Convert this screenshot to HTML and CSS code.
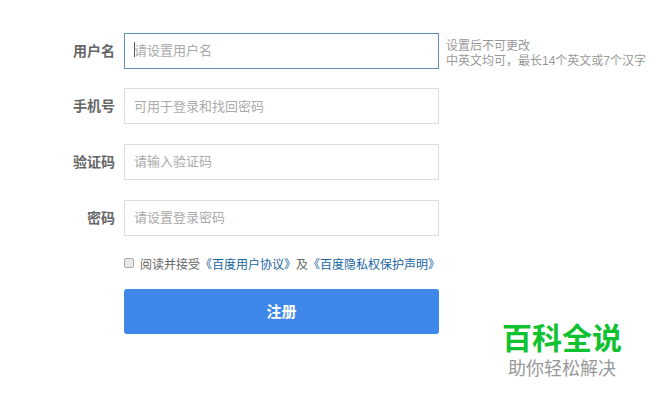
FILE: index.html
```html
<!DOCTYPE html>
<html lang="zh-CN">
<head>
    <meta charset="UTF-8">
    <title>注册</title>
    <link rel="stylesheet" href="styles.css">
</head>
<body>
    <form class="reg-form">
        <div class="form-row">
            <label class="form-label" for="username">用户名</label>
            <div class="form-input form-input-focus"><span class="caret"></span><span id="username">请设置用户名</span></div>
            <div class="form-tip">设置后不可更改<br>中英文均可，最长14个英文或7个汉字</div>
        </div>
        <div class="form-row">
            <label class="form-label" for="phone">手机号</label>
            <div class="form-input" id="phone">可用于登录和找回密码</div>
        </div>
        <div class="form-row">
            <label class="form-label" for="code">验证码</label>
            <div class="form-input" id="code">请输入验证码</div>
        </div>
        <div class="form-row">
            <label class="form-label" for="password">密码</label>
            <div class="form-input" id="password">请设置登录密码</div>
        </div>
        <div class="agree">
            <span class="checkbox"></span>
            <span>阅读并接受</span>
            <a href="#">《百度用户协议》</a>
            <span>及</span>
            <a href="#">《百度隐私权保护声明》</a>
        </div>
        <button type="button" class="btn">注册</button>
    </form>

    <div class="watermark">
        <div class="watermark-title">百科全说</div>
        <div class="watermark-sub">助你轻松解决</div>
    </div>
</body>
</html>
```
FILE: styles.css
```css
html, body {
    height: 100%;
}
body {
    margin: 0;
    position: relative;
    overflow: hidden;
    background: #fff;
    font-family: "Liberation Sans", "Noto Sans CJK SC", sans-serif;
}
.reg-form {
    width: 315px;
    margin-left: 124px;
    padding-top: 32.6px;
}
.form-row {
    position: relative;
    height: 36px;
    margin-bottom: 19.7px;
}
.form-label {
    position: absolute;
    right: 324px;
    top: 0;
    width: 80px;
    line-height: 36px;
    text-align: right;
    font-size: 14px;
    font-weight: bold;
    color: #666;
}
.form-input {
    box-sizing: border-box;
    display: flex;
    align-items: center;
    width: 315px;
    height: 36px;
    padding: 0 0 2px 9px;
    border: 1px solid #ddd;
    font-size: 13px;
    color: #aaa;
}
.form-input-focus {
    border-color: #5c8fb8;
}
.caret {
    width: 1px;
    height: 15px;
    background: #555;
    margin-right: -1px;
}
.form-tip {
    position: absolute;
    left: 322px;
    top: 6px;
    width: 230px;
    font-size: 12px;
    line-height: 15px;
    color: #999;
}
.agree {
    display: flex;
    align-items: center;
    height: 20px;
    margin-top: -2px;
    font-size: 12px;
    color: #666;
    white-space: nowrap;
}
.agree a {
    color: #1b66a0;
    text-decoration: none;
}
.checkbox {
    box-sizing: border-box;
    flex-shrink: 0;
    width: 10px;
    height: 10px;
    margin-right: 6px;
    border: 1px solid #aaa;
    border-radius: 2px;
    background: #e8e8e8;
}
.btn {
    display: block;
    width: 315px;
    height: 45px;
    margin-top: 16px;
    padding: 0 0 3px;
    border: none;
    border-radius: 3px;
    background: #3f88ea;
    color: #fff;
    font-family: inherit;
    font-size: 15px;
    font-weight: bold;
}
.watermark {
    position: absolute;
    left: 501px;
    top: 322px;
    width: 122px;
    text-align: center;
}
.watermark-title {
    font-size: 30px;
    line-height: 34px;
    font-weight: bold;
    color: #10c22f;
    white-space: nowrap;
}
.watermark-sub {
    margin-top: 2px;
    font-size: 18px;
    line-height: 22px;
    color: #999;
    white-space: nowrap;
}
```
